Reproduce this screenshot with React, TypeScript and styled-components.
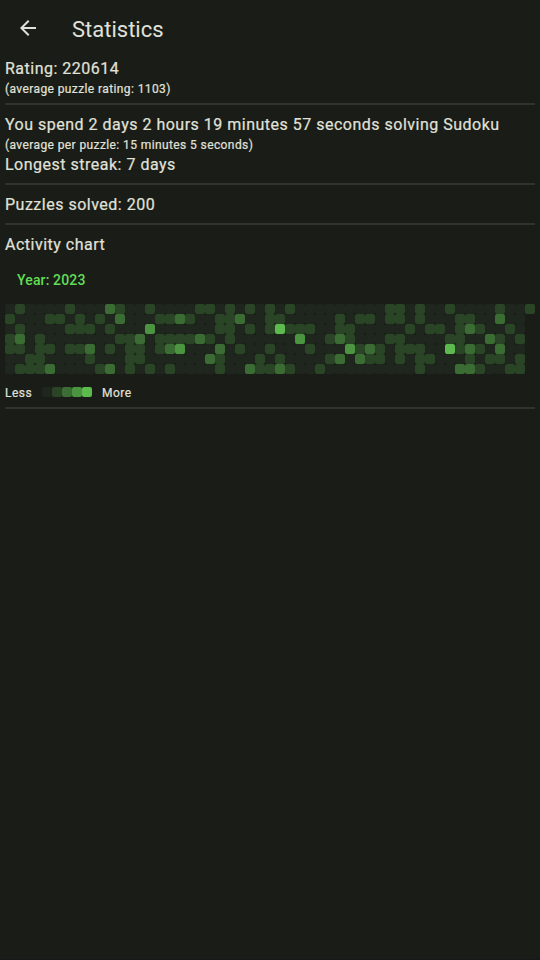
import React from "react";
import styled, { createGlobalStyle } from "styled-components";

const GlobalStyle = createGlobalStyle`
  * { box-sizing: border-box; }
  body {
    margin: 0;
    background: #1a1c18;
    color: #e0e2da;
    font-family: Roboto, sans-serif;
  }
`;

const levelColors = ["#1e261d", "#2a4426", "#3b6c33", "#4b9541", "#5cba4e"];

const Screen = styled.div`
  height: 960px;
  overflow: hidden;
  display: flex;
  flex-direction: column;
  border-bottom: 1px solid #19161a;
`;

const AppBar = styled.header`
  height: 56px;
  flex: none;
  display: flex;
  align-items: center;
  padding: 4px 16px 0;
`;

const BackButton = styled.button`
  width: 24px;
  height: 24px;
  padding: 0;
  margin: 0 32px 4px 0;
  border: 0;
  background: none;
  color: inherit;
  svg { display: block; }
`;

const Title = styled.h1`
  margin: 0;
  font-size: 22px;
  font-weight: 400;
  line-height: 28px;
`;

const Content = styled.main`
  padding: 0 5px;
`;

const Line = styled.div`
  padding-top: 2px;
  font-size: 16px;
  line-height: 22px;
  letter-spacing: 0.5px;
  white-space: nowrap;
  -webkit-text-stroke: 0.2px currentColor;
`;

const Note = styled.div<{ $spacing?: number }>`
  padding-top: 2px;
  font-size: 12px;
  line-height: 14px;
  letter-spacing: ${(p) => p.$spacing ?? 0.4}px;
  -webkit-text-stroke: 0.2px currentColor;
`;

const Divider = styled.div`
  height: 2px;
  margin: 7px 0;
  background: #30322e;
`;

const YearButton = styled.button`
  display: block;
  height: 48px;
  padding: 0 12px;
  border: 0;
  background: none;
  color: #62dd55;
  font: 500 14px/20px Roboto, sans-serif;
  letter-spacing: 0.14px;
`;

const Chart = styled.div`
  display: grid;
  grid-auto-flow: column;
  grid-template-rows: repeat(7, 10px);
  grid-auto-columns: 10px;
`;

const Cell = styled.div<{ $level: number }>`
  width: 10px;
  height: 10px;
  border-radius: 2px;
  background: ${(p) => levelColors[p.$level]};
`;

const Legend = styled.div`
  display: flex;
  align-items: center;
  height: 16px;
  margin-top: 10px;
`;

const Scale = styled.div`
  display: flex;
  margin: 0 10px 0 auto;
`;

const LegendStart = styled.div`
  display: flex;
  align-items: center;
  width: 97px;
`;

// Days with activity for each weekday: weeks listed by level 1 to 4.
const activity: [number[], number[], number[], number[]][] = [
  [[1, 6, 11, 14, 19, 20, 22, 24, 26, 28, 38, 39, 41, 44, 49, 52], [10], [], []],
  [[0, 4, 5, 7, 9, 15, 16, 18, 21, 22, 26, 27, 33, 35, 36, 38, 39, 41, 45, 46], [11, 17, 23, 49], [], []],
  [[1, 6, 7, 8, 10, 21, 22, 24, 26, 28, 29, 30, 33, 34, 40, 42, 43, 45, 47, 50], [46], [14], [27]],
  [[0, 3, 11, 12, 15, 16, 17, 18, 20, 22, 32, 34, 38, 39, 44, 45, 49, 51], [1, 13, 19, 33, 48], [29], []],
  [[0, 1, 3, 4, 6, 7, 10, 12, 13, 15, 23, 26, 30, 35, 37, 39, 40, 41, 45, 47], [8, 16, 21, 36, 46, 49], [17, 34], [44]],
  [[2, 3, 8, 12, 13, 21, 25, 27, 32, 36, 37, 39, 41, 42, 46, 48, 49, 51], [20, 33, 35], [], []],
  [[1, 2, 3, 9, 12, 14, 16, 21, 25, 26, 28, 31, 41, 47, 50, 51], [4, 10, 24, 27, 45, 46], [], []],
];

const days = Array.from({ length: 365 }, (_, i) => {
  const week = Math.floor(i / 7);
  return activity[i % 7].findIndex((weeks) => weeks.includes(week)) + 1;
});

export default function App() {
  return (
    <>
      <GlobalStyle />
      <Screen>
        <AppBar>
          <BackButton aria-label="Back">
            <svg width="24" height="24" viewBox="0 0 24 24" fill="currentColor">
              <path d="M20 11H7.83l5.59-5.59L12 4l-8 8 8 8 1.41-1.41L7.83 13H20v-2z" />
            </svg>
          </BackButton>
          <Title>Statistics</Title>
        </AppBar>
        <Content>
          <Line>Rating: 220614</Line>
          <Note>(average puzzle rating: 1103)</Note>
          <Divider />
          <Line>You spend 2 days 2 hours 19 minutes 57 seconds solving Sudoku</Line>
          <Note>(average per puzzle: 15 minutes 5 seconds)</Note>
          <Line>Longest streak: 7 days</Line>
          <Divider />
          <Line>Puzzles solved: 200</Line>
          <Divider />
          <Line>Activity chart</Line>
          <YearButton>Year: 2023</YearButton>
          <Chart>
            {days.map((level, i) => (
              <Cell key={i} $level={level} />
            ))}
          </Chart>
          <Legend>
            <LegendStart>
              <Note $spacing={0.5}>Less</Note>
              <Scale>
                {levelColors.map((_, level) => (
                  <Cell key={level} $level={level} />
                ))}
              </Scale>
            </LegendStart>
            <Note $spacing={0.5}>More</Note>
          </Legend>
          <Divider />
        </Content>
      </Screen>
    </>
  );
}
